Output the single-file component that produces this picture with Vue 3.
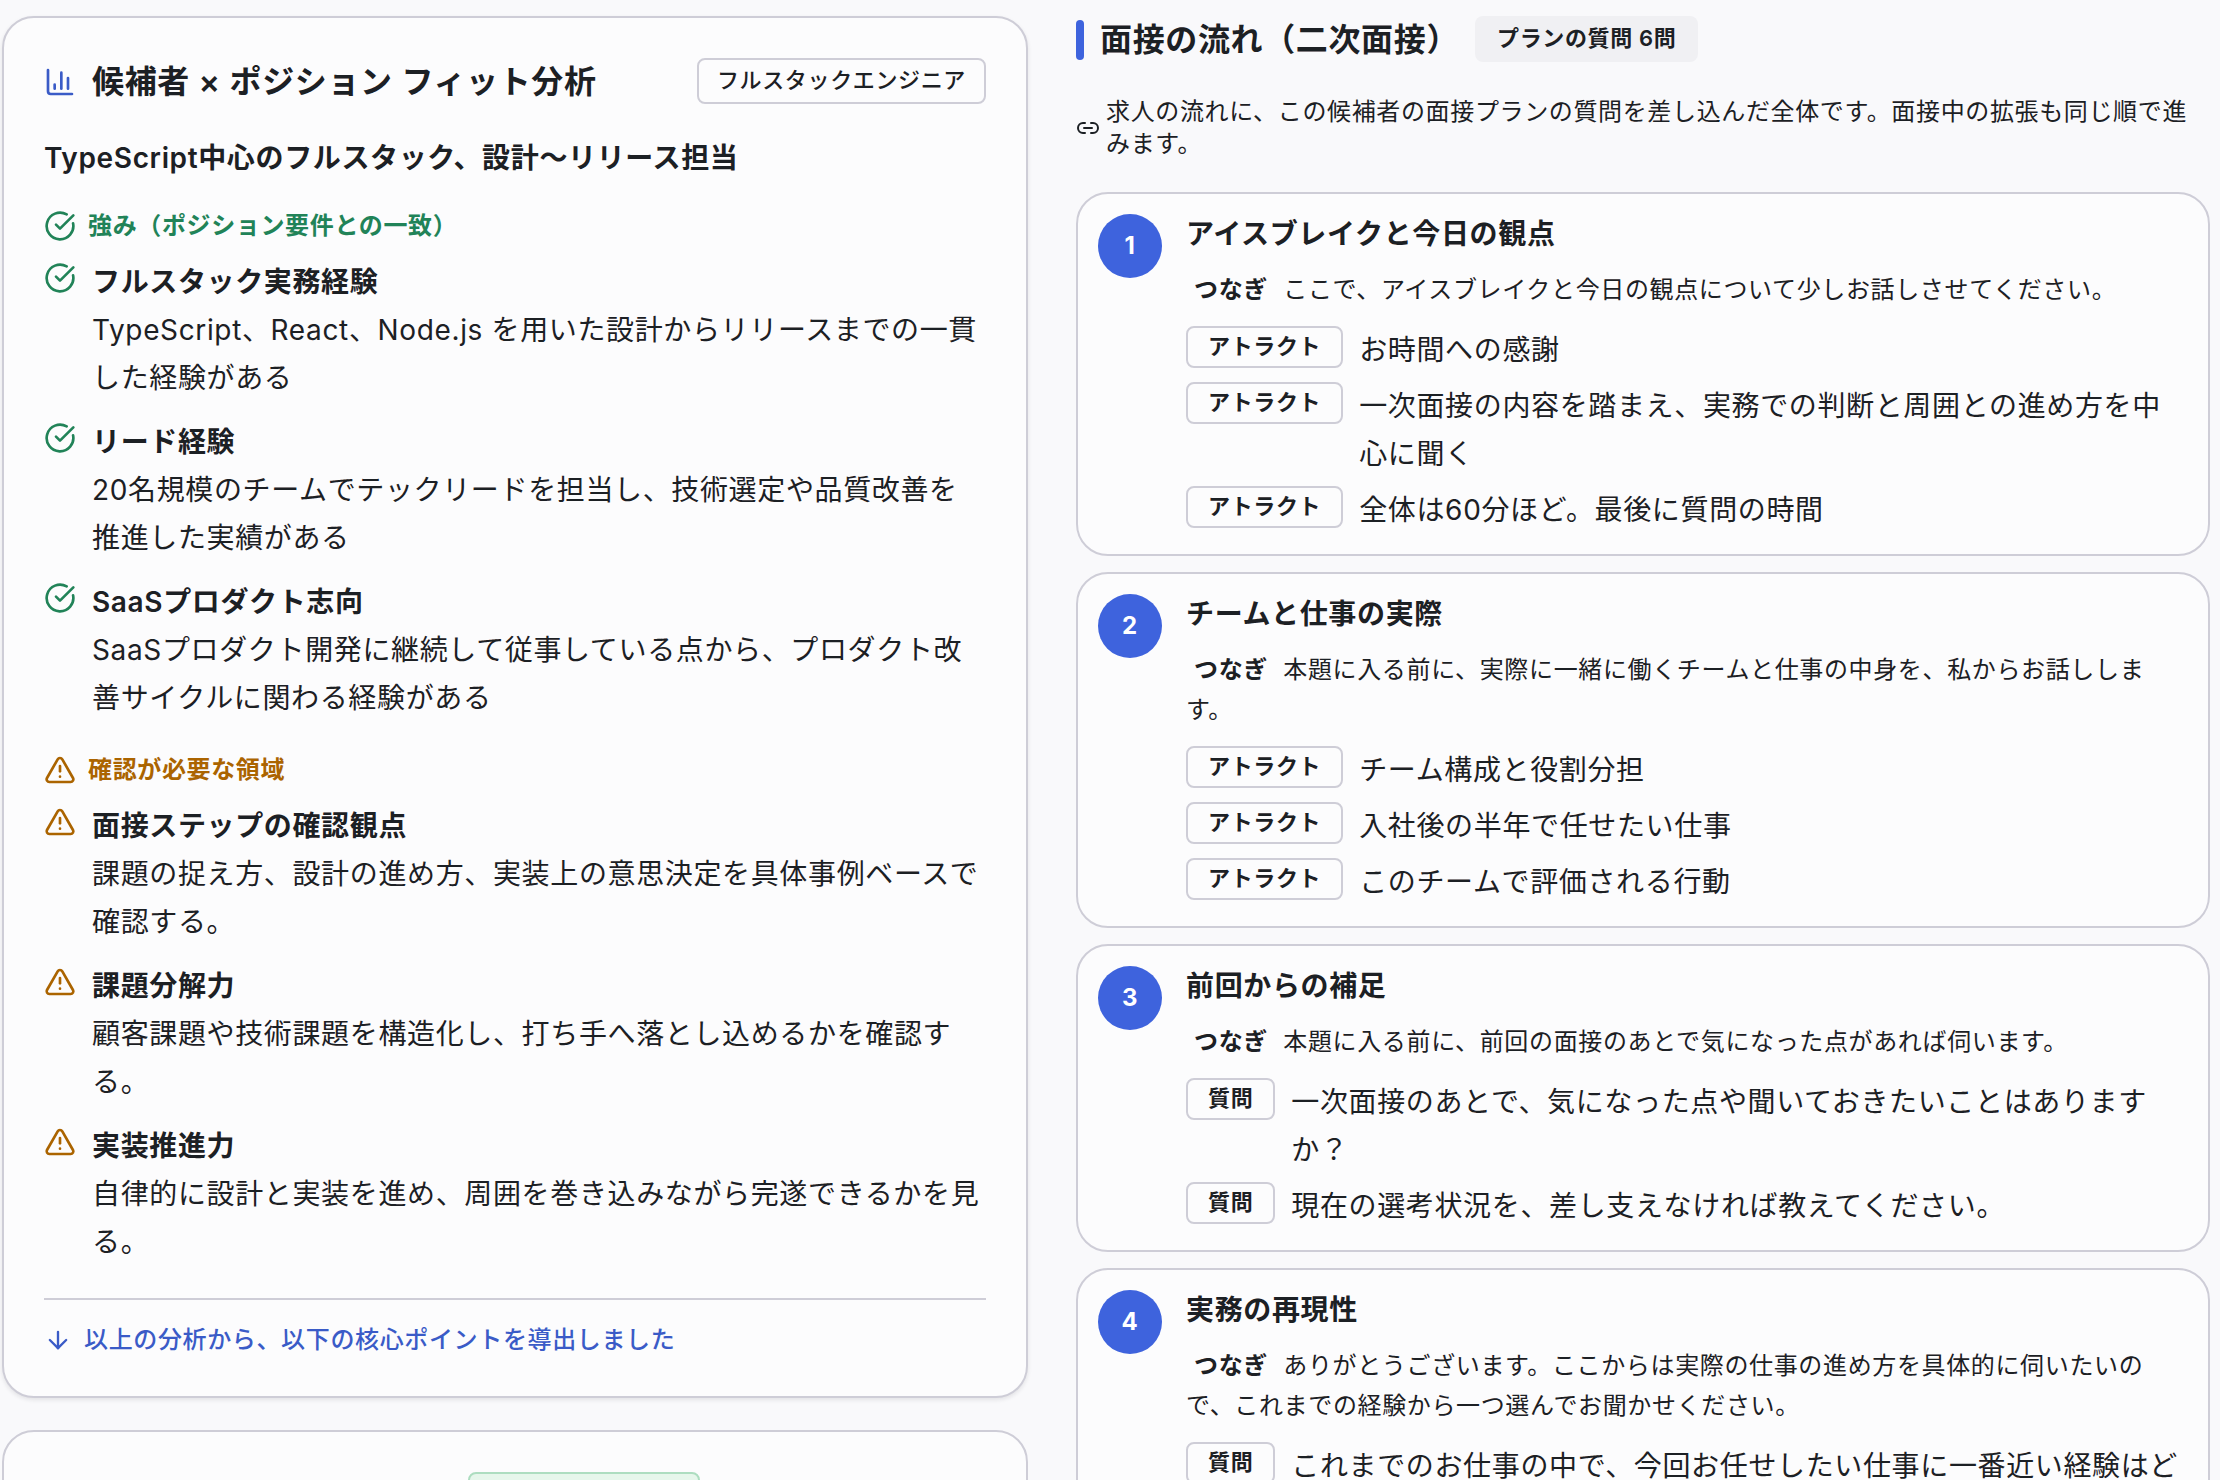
<script setup>
import { ref } from 'vue'

// フィット分析の2グループ（強み / 要確認）
const groups = ref([
  {
    kind: 'good',
    label: '強み（ポジション要件との一致）',
    items: [
      { title: 'フルスタック実務経験', text: 'TypeScript、React、Node.js を用いた設計からリリースまでの一貫した経験がある' },
      { title: 'リード経験', text: '20名規模のチームでテックリードを担当し、技術選定や品質改善を推進した実績がある' },
      { title: 'SaaSプロダクト志向', text: 'SaaSプロダクト開発に継続して従事している点から、プロダクト改善サイクルに関わる経験がある' }
    ]
  },
  {
    kind: 'warn',
    label: '確認が必要な領域',
    items: [
      { title: '面接ステップの確認観点', text: '課題の捉え方、設計の進め方、実装上の意思決定を具体事例ベースで確認する。' },
      { title: '課題分解力', text: '顧客課題や技術課題を構造化し、打ち手へ落とし込めるかを確認する。' },
      { title: '実装推進力', text: '自律的に設計と実装を進め、周囲を巻き込みながら完遂できるかを見る。' }
    ]
  }
])

// 面接の流れ
const steps = ref([
  {
    title: 'アイスブレイクと今日の観点',
    bridge: 'ここで、アイスブレイクと今日の観点について少しお話しさせてください。',
    rows: [
      { tag: 'アトラクト', text: 'お時間への感謝' },
      { tag: 'アトラクト', text: '一次面接の内容を踏まえ、実務での判断と周囲との進め方を中心に聞く' },
      { tag: 'アトラクト', text: '全体は60分ほど。最後に質問の時間' }
    ]
  },
  {
    title: 'チームと仕事の実際',
    bridge: '本題に入る前に、実際に一緒に働くチームと仕事の中身を、私からお話しします。',
    rows: [
      { tag: 'アトラクト', text: 'チーム構成と役割分担' },
      { tag: 'アトラクト', text: '入社後の半年で任せたい仕事' },
      { tag: 'アトラクト', text: 'このチームで評価される行動' }
    ]
  },
  {
    title: '前回からの補足',
    bridge: '本題に入る前に、前回の面接のあとで気になった点があれば伺います。',
    rows: [
      { tag: '質問', text: '一次面接のあとで、気になった点や聞いておきたいことはありますか？' },
      { tag: '質問', text: '現在の選考状況を、差し支えなければ教えてください。' }
    ]
  },
  {
    title: '実務の再現性',
    bridge: 'ありがとうございます。ここからは実際の仕事の進め方を具体的に伺いたいので、これまでの経験から一つ選んでお聞かせください。',
    rows: [
      { tag: '質問', text: 'これまでのお仕事の中で、今回お任せしたい仕事に一番近い経験はど' }
    ]
  }
])

const iconPaths = {
  good: ['M21.801 10A10 10 0 1 1 17 3.335', 'm9 11 3 3L22 4'],
  warn: ['m21.73 18-8-14a2 2 0 0 0-3.48 0l-8 14A2 2 0 0 0 4 21h16a2 2 0 0 0 1.73-3', 'M12 9v4', 'M12 17h.01']
}
</script>

<template>
  <main class="page">
    <div class="column left">
      <section class="card analysis">
        <header class="card-head">
          <svg class="icon accent" viewBox="0 0 24 24" aria-hidden="true">
            <path d="M3 3v16a2 2 0 0 0 2 2h16" />
            <path d="M18 17V9" />
            <path d="M13 17V5" />
            <path d="M8 17v-3" />
          </svg>
          <h2 class="heading">候補者 × ポジション フィット分析</h2>
          <span class="chip outline role">フルスタックエンジニア</span>
        </header>
        <p class="summary">TypeScript中心のフルスタック、設計〜リリース担当</p>

        <div v-for="group in groups" :key="group.kind" class="group" :class="group.kind">
          <h3 class="group-label">
            <svg class="icon" viewBox="0 0 24 24" aria-hidden="true">
              <path v-for="d in iconPaths[group.kind]" :key="d" :d="d" />
            </svg>
            {{ group.label }}
          </h3>
          <ul class="points">
            <li v-for="item in group.items" :key="item.title" class="point">
              <svg class="icon" viewBox="0 0 24 24" aria-hidden="true">
                <path v-for="d in iconPaths[group.kind]" :key="d" :d="d" />
              </svg>
              <div class="point-body">
                <h4 class="point-title">{{ item.title }}</h4>
                <p>{{ item.text }}</p>
              </div>
            </li>
          </ul>
        </div>

        <footer class="card-foot">
          <svg class="icon" viewBox="0 0 24 24" aria-hidden="true">
            <path d="M12 5v14" />
            <path d="m19 12-7 7-7-7" />
          </svg>
          以上の分析から、以下の核心ポイントを導出しました
        </footer>
      </section>

      <section class="card next-card">
        <span class="badge"></span>
      </section>
    </div>

    <div class="column right">
      <header class="flow-head">
        <span class="bar"></span>
        <h2 class="heading">面接の流れ（二次面接）</h2>
        <span class="chip soft">プランの質問 6問</span>
      </header>
      <div class="lead">
        <svg class="icon" viewBox="0 0 24 24" aria-hidden="true">
          <path d="M9 17H7A5 5 0 0 1 7 7h2" />
          <path d="M15 7h2a5 5 0 1 1 0 10h-2" />
          <path d="M8 12h8" />
        </svg>
        <p>求人の流れに、この候補者の面接プランの質問を差し込んだ全体です。面接中の拡張も同じ順で進みます。</p>
      </div>

      <ol class="steps">
        <li v-for="(step, index) in steps" :key="step.title" class="card step">
          <span class="number">{{ index + 1 }}</span>
          <div class="step-body">
            <h3 class="step-title">{{ step.title }}</h3>
            <p class="bridge"><strong>つなぎ</strong> {{ step.bridge }}</p>
            <ul class="rows">
              <li v-for="row in step.rows" :key="row.text" class="row">
                <span class="chip outline small">{{ row.tag }}</span>
                <p>{{ row.text }}</p>
              </li>
            </ul>
          </div>
        </li>
      </ol>
    </div>
  </main>
</template>

<style>
body {
  margin: 0;
  background: #f9f9fb;
}
</style>

<style scoped>
.page {
  display: grid;
  grid-template-columns: minmax(0, 19fr) minmax(0, 21fr);
  column-gap: 48px;
  box-sizing: border-box;
  height: 100vh;
  overflow: hidden;
  padding: 16px 10px 0 2px;
  color: #1c2024;
  font-family: Inter, 'Noto Sans CJK JP', sans-serif;
  font-size: 32px;
  letter-spacing: 0.02em;
}

h2,
h3,
h4,
p,
ul,
ol {
  margin: 0;
  padding: 0;
  list-style: none;
}

.card {
  box-sizing: border-box;
  background: #fcfcfd;
  border: 2px solid #cecdd7;
  border-radius: 32px;
}

.icon {
  flex: none;
  width: 32px;
  height: 32px;
  fill: none;
  stroke: currentColor;
  stroke-width: 2;
  stroke-linecap: round;
  stroke-linejoin: round;
}

.accent {
  color: #3a5bc7;
}

.heading {
  font-size: 32px;
  line-height: 48px;
  font-weight: 600;
}

/* チップ */
.chip {
  flex: none;
  align-self: flex-start;
  box-sizing: border-box;
  height: 46px;
  padding: 0 18px;
  border: 2px solid transparent;
  border-radius: 8px;
  font-size: 22px;
  line-height: 40px;
  font-weight: 500;
  white-space: nowrap;
}

.chip.outline {
  border-color: #cecdd7;
}

.chip.soft {
  padding: 0 20px;
  background: #f0f0f3;
  font-weight: 600;
}

.chip.small {
  height: 42px;
  padding: 0 20px;
  line-height: 36px;
  font-weight: 600;
}

/* 左カラム */
.left {
  display: flex;
  flex-direction: column;
  gap: 32px;
}

.analysis {
  flex: none;
  padding: 40px;
  box-shadow: 0 2px 4px rgba(28, 32, 36, 0.1);
}

.card-head {
  display: flex;
  align-items: center;
  gap: 16px;
}

.role {
  margin-left: auto;
}

.summary {
  margin: 32px 0;
  font-size: 28px;
  line-height: 40px;
  font-weight: 600;
}

.group {
  margin-bottom: 32px;
}

.group-label {
  display: flex;
  align-items: center;
  gap: 12px;
  margin-bottom: 16px;
  font-size: 24px;
  line-height: 32px;
  font-weight: 600;
}

.good .icon,
.good .group-label {
  color: #218358;
}

.warn .icon,
.warn .group-label {
  color: #ab6400;
}

.points {
  display: grid;
  gap: 16px;
}

.point {
  display: flex;
  gap: 16px;
  font-size: 28px;
  line-height: 48px;
}

.point .icon {
  margin-top: 4px;
}

.point-body {
  flex: 1;
  min-width: 0;
}

.point-title {
  font-size: 28px;
  font-weight: 600;
}

.card-foot {
  display: flex;
  align-items: center;
  gap: 12px;
  padding-top: 24px;
  border-top: 2px solid #cecdd7;
  color: #3a5bc7;
  font-size: 24px;
  line-height: 32px;
  font-weight: 500;
}

.card-foot .icon {
  width: 28px;
  height: 28px;
}

.next-card {
  flex: 1 0 auto;
  min-height: 160px;
  padding: 40px;
}

.badge {
  display: block;
  box-sizing: border-box;
  width: 232px;
  height: 46px;
  margin-left: 45%;
  background: #e6f6eb;
  border: 2px solid #adddc0;
  border-radius: 8px;
}

/* 右カラム */
.flow-head {
  display: flex;
  align-items: center;
  gap: 16px;
}

.bar {
  width: 8px;
  height: 40px;
  border-radius: 4px;
  background: #3e63dd;
}

.lead {
  display: flex;
  align-items: center;
  gap: 6px;
  margin: 32px 0;
  font-size: 24px;
  line-height: 32px;
}

.lead .icon {
  width: 24px;
  height: 24px;
}

.steps {
  display: grid;
  gap: 16px;
}

.step {
  display: flex;
  align-items: flex-start;
  gap: 24px;
  padding: 20px;
}

.number {
  flex: none;
  width: 64px;
  border-radius: 50%;
  background: #3e63dd;
  color: #fff;
  font-size: 24px;
  line-height: 64px;
  font-weight: 700;
  text-align: center;
}

.step-body {
  flex: 1;
  min-width: 0;
}

.step-title {
  font-size: 28px;
  line-height: 40px;
  font-weight: 600;
}

.bridge {
  margin: 16px 0;
  font-size: 24px;
  line-height: 40px;
}

.bridge strong {
  padding: 0 8px;
  font-weight: 600;
}

.rows {
  display: grid;
  gap: 8px;
}

.row {
  display: flex;
  align-items: flex-start;
  gap: 16px;
  font-size: 28px;
  line-height: 48px;
}
</style>
